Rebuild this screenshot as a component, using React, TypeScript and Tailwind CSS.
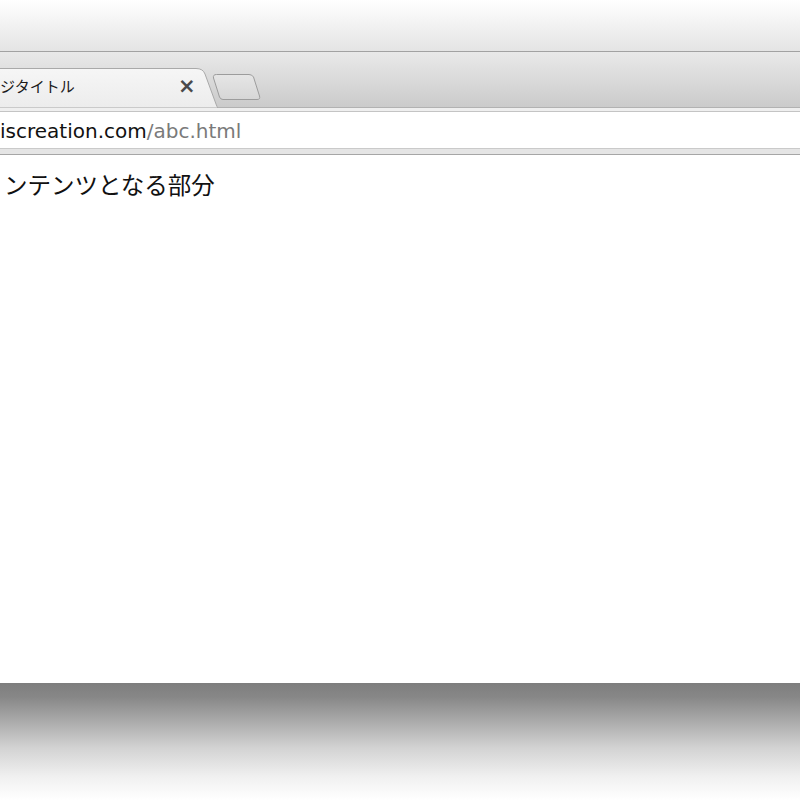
import React from "react";

const jp = "font-['Noto_Sans_CJK_JP','Noto_Sans',sans-serif]";

export default function App() {
  return (
    <div className="w-[800px] h-[800px] flex flex-col bg-white overflow-hidden">
      {/* window shadow above */}
      <div className="h-[51px] bg-gradient-to-b from-white to-[#e4e4e4]" />
      <div className="h-px bg-[#a2a2a2]" />

      {/* tab strip */}
      <div className="h-[55px] flex items-end bg-gradient-to-b from-[#e9e9e9] to-[#cbcbcb]">
        <div className="relative w-[218px] h-[39px] shrink-0">
          <svg className="absolute inset-0" width="218" height="40" viewBox="0 0 218 40">
            <defs>
              <linearGradient id="tabg" x1="0" y1="0" x2="0" y2="1">
                <stop offset="0" stopColor="#f6f6f6" />
                <stop offset="1" stopColor="#ececec" />
              </linearGradient>
            </defs>
            <path
              d="M-5 40 L-5 0.5 L196 0.5 Q203 0.5 205 6 L216 36 Q217 39 218 40 Z"
              fill="url(#tabg)"
              stroke="#a9a9a9"
              strokeWidth="1"
            />
          </svg>
          <div className={`relative flex items-center h-full pb-[2px] text-[15px] text-[#1a1a1a] ${jp}`}>
            <span className="w-[178px]">ジタイトル</span>
            <span className="text-[21px] leading-none text-[#4a4a4a] font-['DejaVu_Sans',sans-serif] font-bold">×</span>
          </div>
        </div>
        <svg className="mb-[7px] -ml-[6px]" width="50" height="26" viewBox="0 0 50 26">
          <defs>
            <linearGradient id="ntg" x1="0" y1="0" x2="0" y2="1">
              <stop offset="0" stopColor="#e6e6e6" />
              <stop offset="1" stopColor="#d6d6d6" />
            </linearGradient>
          </defs>
          <path
            d="M4.5 0.5 L37 0.5 Q40 0.5 41.5 3 L47.5 22 Q48.5 25.5 45 25.5 L11 25.5 Q8.5 25.5 7.5 23 L1.5 4 Q0.8 0.5 4.5 0.5 Z"
            fill="url(#ntg)"
            stroke="#9c9c9c"
            strokeWidth="1"
          />
        </svg>
      </div>

      {/* toolbar / address bar */}
      <div className="h-px bg-[#b2b2b2] ml-[213px]" />
      <div className="h-[3px] bg-[#efefef]" />
      <div className="h-px bg-[#c4c4c4]" />
      <div className="h-[36px] bg-white flex items-center pt-[2px] font-['DejaVu_Sans',sans-serif] text-[20px]">
        <span className="text-[#111]">iscreation.com</span>
        <span className="text-[#7a7a7a]">/abc.html</span>
      </div>
      <div className="h-px bg-[#cacaca]" />
      <div className="h-[5px] bg-[#e5e5e5]" />
      <div className="h-px bg-[#a6a6a6]" />

      {/* page content */}
      <div className="flex-1 bg-white">
        <p className={`pl-[4px] pt-[14px] text-[23.5px] leading-[30px] text-[#111] ${jp}`}>
          ンテンツとなる部分
        </p>
      </div>

      {/* reflection / shadow below */}
      <div className="h-[117px] bg-[linear-gradient(to_bottom,#7e7e7e_0%,#878787_12%,#a6a6a6_30%,#d2d2d2_55%,#f0f0f0_80%,#ffffff_100%)]" />
    </div>
  );
}
